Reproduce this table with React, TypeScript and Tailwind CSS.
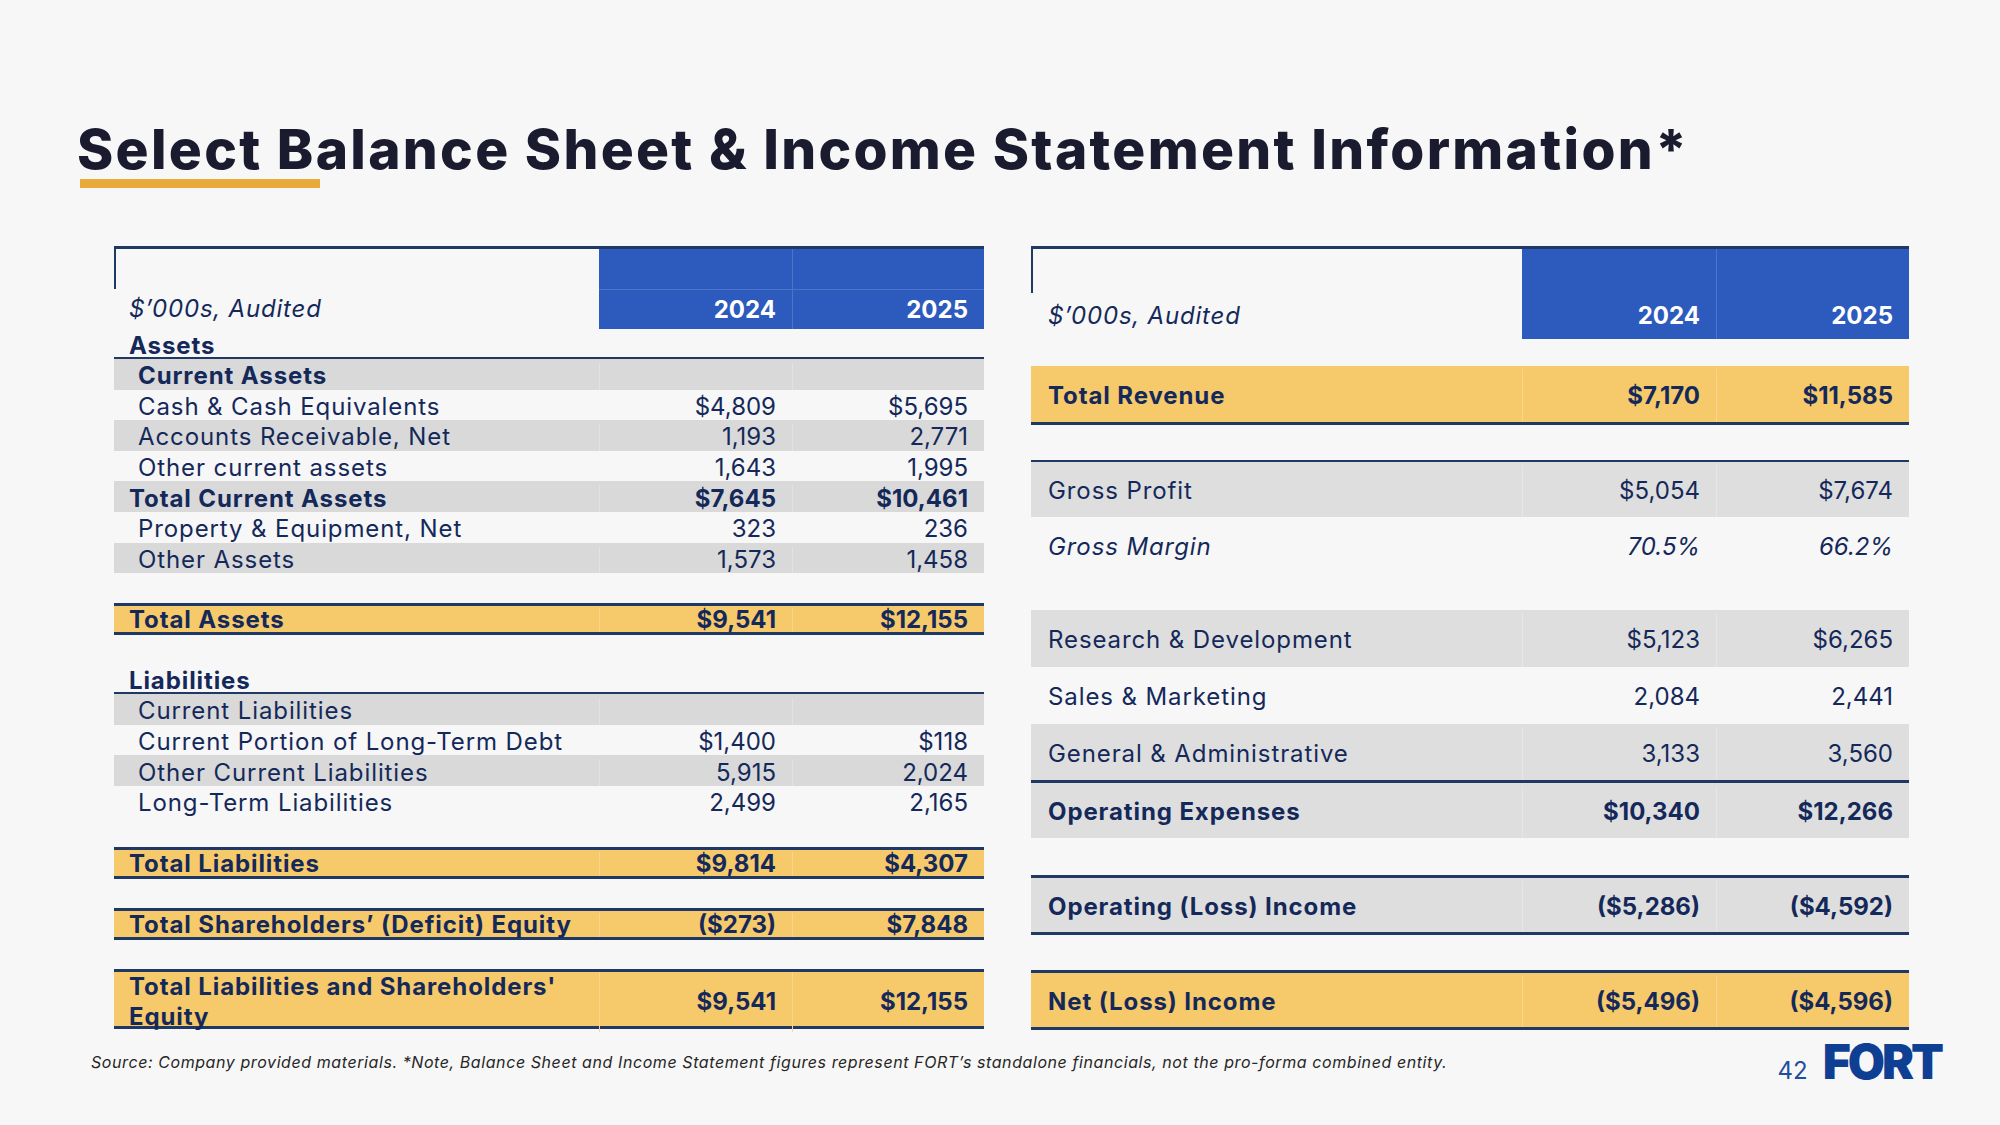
import clsx from "clsx";

// Slide 42 — balance sheet (left) and income statement (right) side by side.

type BsLine = {
  label: string;
  a?: string;
  b?: string;
  shade?: boolean;
  bold?: boolean;
  indent?: boolean;
};

const currentAssets: BsLine[] = [
  { label: "Current Assets", shade: true, bold: true, indent: true },
  { label: "Cash & Cash Equivalents", a: "$4,809", b: "$5,695", indent: true },
  { label: "Accounts Receivable, Net", a: "1,193", b: "2,771", shade: true, indent: true },
  { label: "Other current assets", a: "1,643", b: "1,995", indent: true },
  { label: "Total Current Assets", a: "$7,645", b: "$10,461", shade: true, bold: true },
  { label: "Property & Equipment, Net", a: "323", b: "236", indent: true },
  { label: "Other Assets", a: "1,573", b: "1,458", shade: true, indent: true },
];

const liabilities: BsLine[] = [
  { label: "Current Liabilities", shade: true, indent: true },
  { label: "Current Portion of Long-Term Debt", a: "$1,400", b: "$118", indent: true },
  { label: "Other Current Liabilities", a: "5,915", b: "2,024", shade: true, indent: true },
  { label: "Long-Term Liabilities", a: "2,499", b: "2,165", indent: true },
];

export default function App() {
  return (
    <div className="w-[2000px] h-[1125px] overflow-hidden bg-[#f7f7f7] font-[Inter,sans-serif] text-[#14295a]">
      <div className="pt-[122px] pl-[77px]">
        <h1 className="text-[55px] leading-[54px] font-extrabold text-[#1a1b2e] tracking-[2.3px]">
          Select Balance Sheet &amp; Income Statement Information*
        </h1>
        <div className="mt-[3px] ml-[3px] w-[240px] h-[9px] bg-[#e9aa3b]" />
      </div>

      <div className="mt-[58px] pl-[114px] flex items-start gap-[47px]">
        <BalanceSheet />
        <IncomeStatement />
      </div>

      <footer className="mt-[12px] h-[40px] flex items-center pr-[59px]">
        <p className="pl-[91px] text-[16px] italic tracking-[0.58px] text-[#262626]">
          Source: Company provided materials. *Note, Balance Sheet and Income Statement figures represent FORT’s
          standalone financials, not the pro-forma combined entity.
        </p>
        <div className="ml-auto flex items-baseline gap-[15px]">
          <span className="text-[24px] leading-none text-[#1f4e9c]">42</span>
          <span className="text-[48px] leading-none font-black tracking-[-3px] text-[#0f3f92]">FORT</span>
        </div>
      </footer>
    </div>
  );
}

// ─── Balance sheet ──────────────────────────────────────────────────────

function BalanceSheet() {
  return (
    <div className="w-[870px] border-t-[3px] border-[#1f3864] text-[24px]">
      <div className="grid grid-cols-[485px_193px_192px] h-[40px]">
        <div className="border-l-2 border-[#1f3864]" />
        <div className="bg-[#2d5bbd]" />
        <div className="bg-[#2d5bbd] border-l border-[#4d74cb]" />
      </div>
      <div className="grid grid-cols-[485px_193px_192px] h-[40px]">
        <div className="pl-[15px] flex items-center italic tracking-[0.8px]">$’000s, Audited</div>
        <div className="bg-[#2d5bbd] border-t border-[#4d74cb] flex items-center justify-end pr-4 font-bold text-white">
          2024
        </div>
        <div className="bg-[#2d5bbd] border-t border-l border-[#4d74cb] flex items-center justify-end pr-4 font-bold text-white">
          2025
        </div>
      </div>

      <SectionHead label="Assets" />
      {currentAssets.map((r) => (
        <BsRow key={r.label} {...r} />
      ))}

      <div className="h-[30px]" />
      <BsTotal label="Total Assets" a="$9,541" b="$12,155" />

      <div className="h-[29px]" />
      <SectionHead label="Liabilities" />
      {liabilities.map((r) => (
        <BsRow key={r.label} {...r} />
      ))}

      <div className="h-[30px]" />
      <BsTotal label="Total Liabilities" a="$9,814" b="$4,307" />
      <div className="h-[29px]" />
      <BsTotal label="Total Shareholders’ (Deficit) Equity" a="($273)" b="$7,848" />
      <div className="h-[29px]" />
      <div className="grid grid-cols-[485px_193px_192px] h-[60px] border-y-[3px] border-[#1f3864] bg-[#f6c96b] font-bold">
        <div className="pl-[15px] flex items-center leading-[30px] tracking-[0.9px]">
          Total Liabilities and Shareholders&apos;
          <br />
          Equity
        </div>
        <div className="border-l border-[#f8d68f] flex items-center justify-end pr-4">$9,541</div>
        <div className="border-l border-[#f8d68f] flex items-center justify-end pr-4">$12,155</div>
      </div>
    </div>
  );
}

function SectionHead({ label }: { label: string }) {
  return (
    <div className="h-[30px] pt-[6px] pl-[15px] flex items-center border-b-2 border-[#1f3864] font-bold leading-none tracking-[0.9px]">
      {label}
    </div>
  );
}

function BsRow({ label, a, b, shade, bold, indent }: BsLine) {
  return (
    <div
      className={clsx(
        "grid grid-cols-[485px_193px_192px] h-[30.6px] pt-[4px] leading-none",
        shade && "bg-[#d9d9d9]",
        bold && "font-bold",
      )}
    >
      <div className={clsx("flex items-center tracking-[0.9px]", indent ? "pl-[24px]" : "pl-[15px]")}>{label}</div>
      <div className={clsx("flex items-center justify-end pr-4", shade && "border-l border-[#e1e1e1]")}>{a}</div>
      <div className={clsx("flex items-center justify-end pr-4", shade && "border-l border-[#e1e1e1]")}>{b}</div>
    </div>
  );
}

function BsTotal({ label, a, b }: { label: string; a: string; b: string }) {
  return (
    <div className="grid grid-cols-[485px_193px_192px] h-[32px] pt-[2px] border-y-[3px] border-[#1f3864] bg-[#f6c96b] font-bold leading-none">
      <div className="pl-[15px] flex items-center tracking-[0.9px]">{label}</div>
      <div className="border-l border-[#f8d68f] flex items-center justify-end pr-4">{a}</div>
      <div className="border-l border-[#f8d68f] flex items-center justify-end pr-4">{b}</div>
    </div>
  );
}

// ─── Income statement ───────────────────────────────────────────────────

function IncomeStatement() {
  return (
    <div className="w-[878px] border-t-[3px] border-[#1f3864] text-[24px]">
      <div className="grid grid-cols-[491px_194px_193px] h-[44px]">
        <div className="border-l-2 border-[#1f3864]" />
        <div className="bg-[#2d5bbd]" />
        <div className="bg-[#2d5bbd] border-l border-[#4d74cb]" />
      </div>
      <div className="grid grid-cols-[491px_194px_193px] h-[46px]">
        <div className="pl-[17px] flex items-center italic tracking-[0.8px]">$’000s, Audited</div>
        <div className="bg-[#2d5bbd] flex items-center justify-end pr-4 font-bold text-white">2024</div>
        <div className="bg-[#2d5bbd] border-l border-[#4d74cb] flex items-center justify-end pr-4 font-bold text-white">
          2025
        </div>
      </div>

      <div className="h-[27px]" />
      <IsRow label="Total Revenue" a="$7,170" b="$11,585" tone="gold" bold className="h-[59px] border-b-[3px]" />

      <div className="h-[35px]" />
      <IsRow label="Gross Profit" a="$5,054" b="$7,674" tone="gray" className="h-[57px] border-t-2" />
      <IsRow label="Gross Margin" a="70.5%" b="66.2%" italic className="h-[57px]" />

      <div className="h-[36px]" />
      <IsRow label="Research & Development" a="$5,123" b="$6,265" tone="gray" className="h-[57px]" />
      <IsRow label="Sales & Marketing" a="2,084" b="2,441" className="h-[57px]" />
      <IsRow label="General & Administrative" a="3,133" b="3,560" tone="gray" className="h-[56px]" />
      <IsRow label="Operating Expenses" a="$10,340" b="$12,266" tone="gray" bold className="h-[58px] border-t-[3px]" />

      <div className="h-[37px]" />
      <IsRow label="Operating (Loss) Income" a="($5,286)" b="($4,592)" tone="gray" bold className="h-[60px] border-y-[3px]" />

      <div className="h-[35px]" />
      <IsRow label="Net (Loss) Income" a="($5,496)" b="($4,596)" tone="gold" bold className="h-[60px] border-y-[3px]" />
    </div>
  );
}

function IsRow({
  label,
  a,
  b,
  tone,
  bold,
  italic,
  className,
}: {
  label: string;
  a: string;
  b: string;
  tone?: "gray" | "gold";
  bold?: boolean;
  italic?: boolean;
  className?: string;
}) {
  const divider = tone === "gold" ? "border-l border-[#f8d68f]" : tone === "gray" ? "border-l border-[#e6e6e6]" : "";
  return (
    <div
      className={clsx(
        "grid grid-cols-[491px_194px_193px] pt-[3px] leading-none border-[#1f3864]",
        tone === "gray" && "bg-[#dedede]",
        tone === "gold" && "bg-[#f6c96b]",
        bold && "font-bold",
        italic && "italic",
        className,
      )}
    >
      <div className="pl-[17px] flex items-center tracking-[0.9px]">{label}</div>
      <div className={clsx("flex items-center justify-end pr-4", divider)}>{a}</div>
      <div className={clsx("flex items-center justify-end pr-4", divider)}>{b}</div>
    </div>
  );
}
